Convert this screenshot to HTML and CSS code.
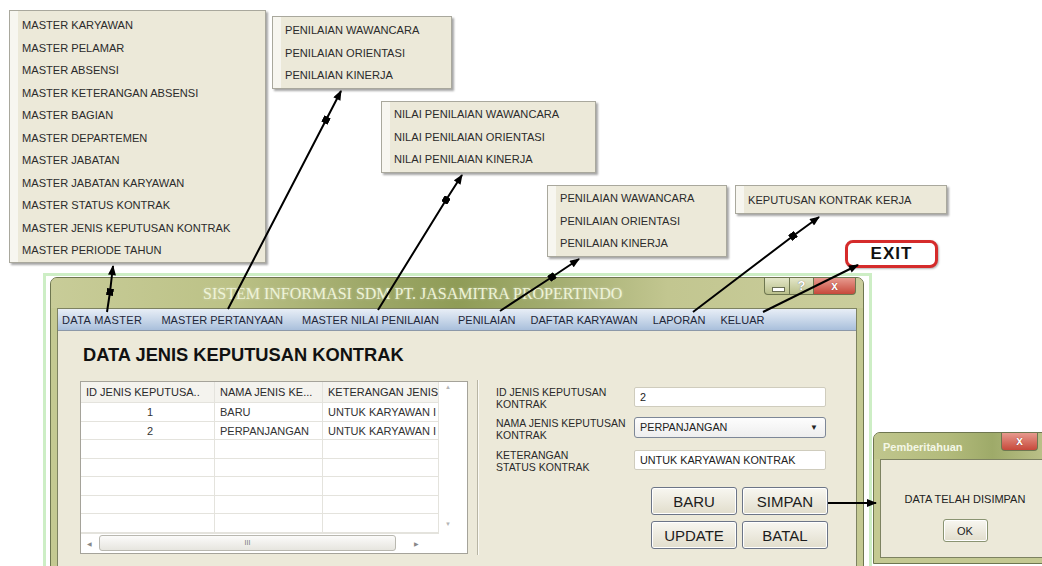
FILE: index.html
```html
<!DOCTYPE html>
<html>
<head>
    <link rel="stylesheet" href="styles.css">
</head>
<body>
<div class="desk">
    <!-- popup menus -->
    <div class="popup m-master">
        <div>MASTER KARYAWAN</div>
        <div>MASTER PELAMAR</div>
        <div>MASTER ABSENSI</div>
        <div>MASTER KETERANGAN ABSENSI</div>
        <div>MASTER BAGIAN</div>
        <div>MASTER DEPARTEMEN</div>
        <div>MASTER JABATAN</div>
        <div>MASTER JABATAN KARYAWAN</div>
        <div>MASTER STATUS KONTRAK</div>
        <div>MASTER JENIS KEPUTUSAN KONTRAK</div>
        <div>MASTER PERIODE TAHUN</div>
    </div>
    <div class="popup m-tanya">
        <div>PENILAIAN WAWANCARA</div>
        <div>PENILAIAN ORIENTASI</div>
        <div>PENILAIAN KINERJA</div>
    </div>
    <div class="popup m-nilai">
        <div>NILAI PENILAIAN WAWANCARA</div>
        <div>NILAI PENILAIAN ORIENTASI</div>
        <div>NILAI PENILAIAN KINERJA</div>
    </div>
    <div class="popup m-penilaian">
        <div>PENILAIAN WAWANCARA</div>
        <div>PENILAIAN ORIENTASI</div>
        <div>PENILAIAN KINERJA</div>
    </div>
    <div class="popup m-laporan">
        <div>KEPUTUSAN KONTRAK KERJA</div>
    </div>

    <div class="exit">EXIT</div>

    <div class="glow"></div>

    <!-- main window -->
    <div class="win main">
        <div class="titlebar">
            <span class="title">SISTEM INFORMASI SDM PT. JASAMITRA PROPERTINDO</span>
            <div class="ctrls">
                <span class="cb cb-min"><i></i></span>
                <span class="cb cb-help">?</span>
                <span class="cb cb-close">x</span>
            </div>
        </div>
        <div class="client">
            <div class="menubar">
                <span class="wide-item">DATA MASTER</span>
                <span class="wide-gap">MASTER PERTANYAAN</span>
                <span class="wide-gap">MASTER NILAI PENILAIAN</span>
                <span>PENILAIAN</span>
                <span>DAFTAR KARYAWAN</span>
                <span>LAPORAN</span>
                <span>KELUAR</span>
            </div>
            <div class="content">
                <h1>DATA JENIS KEPUTUSAN KONTRAK</h1>
                <div class="panes">
                    <div class="grid">
                        <div class="grid-main">
                            <div class="cells">
                                <div class="hd">ID JENIS KEPUTUSA..</div>
                                <div class="hd">NAMA JENIS KE...</div>
                                <div class="hd">KETERANGAN JENIS</div>
                                <div class="c num">1</div><div class="c">BARU</div><div class="c">UNTUK KARYAWAN I</div>
                                <div class="c num">2</div><div class="c">PERPANJANGAN</div><div class="c">UNTUK KARYAWAN I</div>
                                <div class="c"></div><div class="c"></div><div class="c"></div>
                                <div class="c"></div><div class="c"></div><div class="c"></div>
                                <div class="c"></div><div class="c"></div><div class="c"></div>
                                <div class="c"></div><div class="c"></div><div class="c"></div>
                                <div class="c"></div><div class="c"></div><div class="c"></div>
                            </div>
                            <div class="vscroll"><span>&#9650;</span><span>&#9660;</span></div>
                        </div>
                        <div class="hscroll">
                            <span class="arr">&#9664;</span>
                            <div class="thumb">III</div>
                            <span class="arr">&#9654;</span>
                        </div>
                    </div>
                    <div class="sep"></div>
                    <div class="form">
                        <label>ID JENIS KEPUTUSAN<br>KONTRAK</label>
                        <div class="field">2</div>
                        <label>NAMA JENIS KEPUTUSAN<br>KONTRAK</label>
                        <div class="field combo">PERPANJANGAN<span class="drop">&#9660;</span></div>
                        <label>KETERANGAN<br>STATUS KONTRAK</label>
                        <div class="field">UNTUK KARYAWAN KONTRAK</div>
                        <div class="buttons">
                            <button>BARU</button>
                            <button>SIMPAN</button>
                            <button>UPDATE</button>
                            <button>BATAL</button>
                        </div>
                    </div>
                </div>
            </div>
        </div>
    </div>

    <!-- message box -->
    <div class="win dialog">
        <div class="titlebar">
            <span class="dlg-title">Pemberitahuan</span>
            <span class="cb cb-close wide">x</span>
        </div>
        <div class="client dlg-body">
            <p>DATA TELAH DISIMPAN</p>
            <button class="ok">OK</button>
        </div>
    </div>

    <svg class="arrows" width="1042" height="566">
        <defs>
            <marker id="head" viewBox="0 0 10 8" refX="9" refY="4" markerWidth="11" markerHeight="8" orient="auto" markerUnits="userSpaceOnUse">
                <path d="M0,0 L10,4 L0,8 z"/>
            </marker>
            <marker id="dot" viewBox="0 0 8 8" refX="4" refY="4" markerWidth="7" markerHeight="7" orient="auto" markerUnits="userSpaceOnUse">
                <rect width="8" height="8"/>
            </marker>
        </defs>
        <polyline points="107,312 110,292 113,266"/>
        <polyline points="228,309 326,120 341,91"/>
        <polyline points="378,310 446,200 462,175"/>
        <polyline points="500,311 552,277 579,259"/>
        <polyline points="693,312 793,236 819,217"/>
        <line class="plain" x1="763" y1="312" x2="858" y2="265"/>
        <line class="plain" x1="828" y1="503" x2="876" y2="503"/>
    </svg>
</div>
</body>
</html>
```

FILE: styles.css
```css
body {
    margin: 0;
    background: #fff;
    font-family: "Liberation Sans", Arial, sans-serif;
}
.desk {
    position: relative;
    width: 1042px;
    height: 566px;
    overflow: hidden;
}

/* popup menus */
.popup {
    position: absolute;
    background: linear-gradient(90deg, #f7f6f0 0, #f7f6f0 8px, #ece9d9 8px);
    border: 1px solid #a9a89d;
    box-shadow: 2px 2px 2px rgba(0, 0, 0, 0.35);
    font-size: 11.1px;
    color: #2b2b2b;
}
.popup div {
    line-height: 22.5px;
    padding-left: 12px;
    white-space: nowrap;
}
.m-master { left: 9px; top: 10px; width: 255px; padding: 3px 0 0; }
.m-tanya { left: 272px; top: 16px; width: 178px; padding: 2px 0 1px; }
.m-nilai { left: 381px; top: 101px; width: 213px; padding: 1px 0 1px; }
.m-penilaian { left: 547px; top: 185px; width: 178px; padding: 1px 0 1px; }
.m-laporan { left: 735px; top: 185px; width: 210px; padding: 3px 0 1px; }

.exit {
    position: absolute;
    left: 845px;
    top: 240px;
    width: 87px;
    height: 22px;
    border: 3px solid #d52b2b;
    border-radius: 8px;
    background: #fff;
    box-shadow: 1px 1px 2px rgba(0, 0, 0, 0.3);
    font-weight: bold;
    font-size: 17px;
    letter-spacing: 1px;
    line-height: 22px;
    text-align: center;
    color: #111;
}

.glow {
    position: absolute;
    left: 43px;
    top: 273px;
    width: 823px;
    height: 300px;
    border: 3px solid #cdeec5;
}

/* window frame */
.win {
    position: absolute;
    display: flex;
    flex-direction: column;
    border: 1px solid #6e7650;
    border-radius: 7px 7px 0 0;
    background: #c4c992;
    padding: 0 6px 5px;
}
.main {
    left: 50px;
    top: 277px;
    width: 800px;
    height: 290px;
}
.titlebar {
    display: flex;
    align-items: flex-start;
    height: 30px;
    margin: 0 -6px;
    padding: 0 7px 0 6px;
    border-radius: 6px 6px 0 0;
    background: linear-gradient(90deg, #c8cc98 0%, #bcc287 22%, #9fa96a 38%, #8f9c57 50%, #a3ad70 62%, #c2c690 76%, #cacd9c 100%);
}
.title {
    margin-left: 146px;
    line-height: 32px;
    font-family: "Liberation Serif", "Times New Roman", serif;
    font-size: 16px;
    color: #eef3d8;
    text-shadow: 0 0 3px rgba(255, 255, 255, 0.4);
    white-space: nowrap;
}
.ctrls {
    display: flex;
    margin-left: auto;
    margin-right: 0;
}
.cb {
    height: 16px;
    border: 1px solid #6e7650;
    border-top: 0;
    background: linear-gradient(#e3e6c8, #b9bf8a);
    font: bold 12px "Liberation Sans", Arial, sans-serif;
    line-height: 16px;
    text-align: center;
    color: #fff;
}
.cb-min {
    width: 24px;
    border-radius: 0 0 0 4px;
    position: relative;
}
.cb-min i {
    position: absolute;
    left: 7px;
    top: 9px;
    width: 11px;
    height: 3px;
    background: #fff;
    border: 1px solid #6a6f55;
}
.cb-help {
    width: 23px;
    border-left: 0;
    color: #fff;
    text-shadow: 0 0 1px #555;
    font-size: 13px;
}
.cb-close {
    width: 41px;
    border-left: 0;
    border-radius: 0 0 4px 0;
    background: linear-gradient(#e79a8e, #c7493b);
    text-shadow: 0 0 1px #7a1a10;
}

.client {
    flex: 1;
    display: flex;
    flex-direction: column;
    background: #ece9d9;
    border: 1px solid #7d8261;
}
.menubar {
    display: flex;
    height: 21px;
    padding-left: 4px;
    background: linear-gradient(#e8eef6, #c3d3e7 60%, #a9bfdb);
    border-bottom: 1px solid #8c98a8;
    font-size: 11px;
    line-height: 22px;
    color: #1e2638;
}
.menubar span {
    margin-right: 15px;
    white-space: nowrap;
}
.menubar .wide-item {
    letter-spacing: 0.4px;
    margin-right: 19px;
}
.menubar .wide-gap {
    margin-right: 19px;
}
.content {
    padding: 13px 0 0 22px;
}
h1 {
    margin: 0 0 15px 3px;
    font-size: 18.3px;
    line-height: 22px;
    color: #111;
}
.panes {
    display: flex;
    align-items: flex-start;
}

/* data grid */
.grid {
    width: 386px;
    border: 1px solid #a5a39a;
    background: #fff;
    font-size: 11px;
    color: #333;
}
.grid-main {
    display: flex;
}
.cells {
    display: grid;
    grid-template-columns: 134px 108px 116px;
    grid-template-rows: 21px repeat(7, 18.5px);
}
.hd, .c {
    border-right: 1px solid #e4e3dd;
    border-bottom: 1px solid #e4e3dd;
    padding-left: 5px;
    white-space: nowrap;
    overflow: hidden;
}
.hd {
    background: #f4f3ee;
    line-height: 21px;
    color: #2a2a2a;
}
.c {
    line-height: 18px;
}
.c.num {
    text-align: center;
}
.vscroll {
    flex: 1;
    display: flex;
    flex-direction: column;
    justify-content: space-between;
    padding: 2px 0 6px 6px;
    font-size: 6px;
    color: #b5b5b5;
}
.hscroll {
    display: flex;
    align-items: center;
    height: 19px;
    width: 358px;
    border-top: 1px solid #e4e3dd;
    font-size: 6px;
    color: #888;
}
.hscroll .arr {
    width: 17px;
    text-align: center;
}
.thumb {
    width: 295px;
    height: 14px;
    margin-left: 1px;
    border: 1px solid #b9b8b0;
    border-radius: 3px;
    background: linear-gradient(#fbfbfa, #e6e5df);
    font-size: 7px;
    line-height: 14px;
    text-align: center;
    color: #777;
}
.hscroll .arr:last-child {
    margin-left: auto;
    margin-right: 14px;
}
.sep {
    width: 1px;
    height: 175px;
    margin: -1px 17px 0 9px;
    background: #b8b5a4;
    border-right: 1px solid #fbfaf4;
}

/* form */
.form {
    display: grid;
    grid-template-columns: 138px 192px;
    grid-template-rows: 31px 32px 26px;
    padding-top: 5px;
    font-size: 10.5px;
    color: #2a2a2a;
}
.form label {
    line-height: 12px;
}
.field {
    height: 18px;
    margin-top: 1px;
    padding-left: 5px;
    border: 1px solid #cfccbd;
    border-radius: 2px;
    background: #fff;
    line-height: 19px;
    font-size: 10.8px;
    color: #222;
}
.combo {
    display: flex;
    height: 19px;
    margin-top: 0;
    border-color: #7d8797;
    border-radius: 3px;
    background: linear-gradient(#fdfdfd, #eeeeee);
}
.drop {
    margin-left: auto;
    margin-right: 7px;
    font-size: 8px;
    color: #222;
}
.buttons {
    grid-column: 2;
    display: grid;
    grid-template-columns: 86px 86px;
    grid-auto-rows: 28px;
    gap: 6px 5px;
    margin: 12px 0 0 17px;
}
button {
    border: 1px solid #6c7587;
    border-radius: 3px;
    background: linear-gradient(#f8f7f1, #e1ddcc);
    box-shadow: inset 0 0 0 1px #fff;
    font-family: "Liberation Sans", Arial, sans-serif;
    font-size: 15px;
    color: #1c1c1c;
    padding: 0;
}

/* message box */
.dialog {
    left: 873px;
    top: 432px;
    width: 170px;
    height: 125px;
}
.dialog .titlebar {
    height: 26px;
    background: linear-gradient(90deg, #c0c68d 0%, #b3bb7c 40%, #9eaa69 65%, #c2c690 100%);
}
.dlg-title {
    margin-left: 3px;
    line-height: 28px;
    font-size: 11px;
    font-weight: bold;
    color: #f4f7e6;
}
.cb.wide {
    margin-left: auto;
    margin-right: 11px;
    width: 35px;
    height: 17px;
    border-left: 1px solid #6e7650;
    border-radius: 0 0 4px 4px;
}
.dlg-body {
    align-items: center;
}
.dlg-body p {
    margin: 33px 0 0;
    font-size: 11px;
    color: #222;
}
.ok {
    width: 45px;
    height: 23px;
    margin-top: 14px;
    border-color: #8a9472;
    font-size: 11px;
}

/* arrows */
.arrows {
    position: absolute;
    left: 0;
    top: 0;
}
.arrows polyline, .arrows line {
    fill: none;
    stroke: #000;
    stroke-width: 2;
    marker-end: url(#head);
}
.arrows polyline {
    marker-mid: url(#dot);
}
```
